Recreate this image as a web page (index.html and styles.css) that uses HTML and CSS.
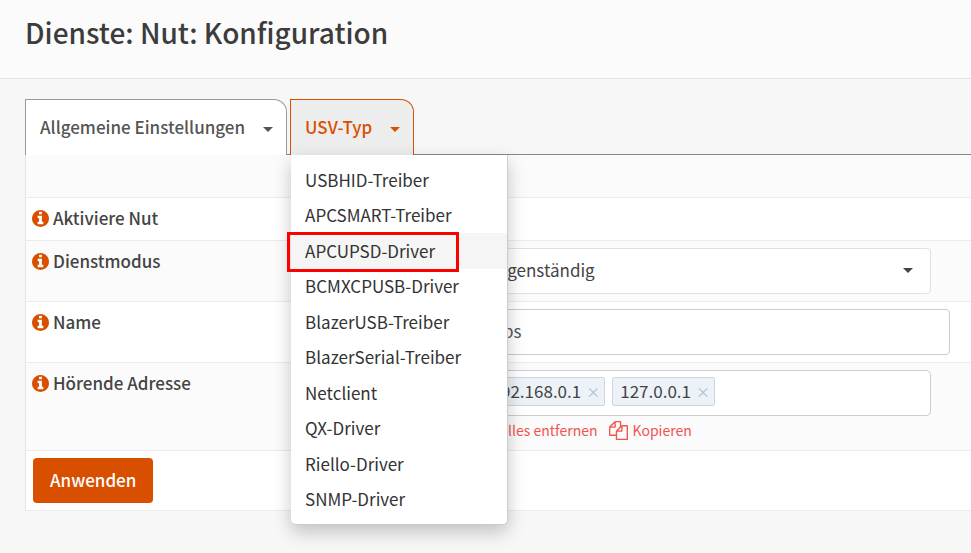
FILE: index.html
```
<!DOCTYPE html>
<html lang="de">
<head>
  <meta charset="UTF-8">
  <title>Dienste: Nut: Konfiguration</title>
  <link rel="stylesheet" href="styles.css">
</head>
<body>

  <!-- Shared icons -->
  <svg class="sprite" aria-hidden="true">
    <symbol id="icon-info" viewBox="128 128 1536 1536">
      <path d="M1152 1376v-160q0-14-9-23t-23-9h-96v-512q0-14-9-23t-23-9h-320q-14 0-23 9t-9 23v160q0 14 9 23t23 9h96v320h-96q-14 0-23 9t-9 23v160q0 14 9 23t23 9h448q14 0 23-9t9-23zm-128-896v-160q0-14-9-23t-23-9h-192q-14 0-23 9t-9 23v160q0 14 9 23t23 9h192q14 0 23-9t9-23zm640 416q0 209-103 385.5t-279.5 279.5-385.5 103-385.5-103-279.5-279.5-103-385.5 103-385.5 279.5-279.5 385.5-103 385.5 103 279.5 279.5 103 385.5z"/>
    </symbol>
    <symbol id="icon-copy" viewBox="0 0 1792 1792">
      <path d="M1696 384q40 0 68 28t28 68v1216q0 40-28 68t-68 28h-960q-40 0-68-28t-28-68v-288h-544q-40 0-68-28t-28-68v-672q0-40 20-88t48-76l408-408q28-28 76-48t88-20h416q40 0 68 28t28 68v328q68-40 128-40h416zm-544 213l-299 299h299v-299zm-640-384l-299 299h299v-299zm196 647l316-316v-416h-384v416q0 40-28 68t-68 28h-416v640h512v-256q0-40 20-88t48-76zm956 804v-1152h-384v416q0 40-28 68t-68 28h-416v640h896z"/>
    </symbol>
  </svg>

  <header class="page-head">
    <h1>Dienste: Nut: Konfiguration</h1>
  </header>

  <main class="content">
    <!-- Tabs -->
    <ul class="tabs">
      <li class="tab active">
        <a href="#general">Allgemeine Einstellungen</a>
        <button type="button" class="toggle" aria-label="Allgemeine Einstellungen öffnen"><span class="caret"></span></button>
      </li>
      <li class="tab open">
        <a href="#ups">USV-Typ</a>
        <button type="button" class="toggle" aria-label="USV-Typ öffnen"><span class="caret"></span></button>
        <ul class="menu">
          <li><a href="#usbhid">USBHID-Treiber</a></li>
          <li><a href="#apcsmart">APCSMART-Treiber</a></li>
          <li class="hover"><a href="#apcupsd">APCUPSD-Driver</a><span class="marker"></span></li>
          <li><a href="#bcmxcpusb">BCMXCPUSB-Driver</a></li>
          <li><a href="#blazerusb">BlazerUSB-Treiber</a></li>
          <li><a href="#blazerserial">BlazerSerial-Treiber</a></li>
          <li><a href="#netclient">Netclient</a></li>
          <li><a href="#qx">QX-Driver</a></li>
          <li><a href="#riello">Riello-Driver</a></li>
          <li><a href="#snmp">SNMP-Driver</a></li>
        </ul>
      </li>
    </ul>

    <!-- Settings form -->
    <form class="settings">
      <div class="row"></div>
      <div class="row">
        <label for="enable"><svg class="info"><use href="#icon-info"/></svg>Aktiviere Nut</label>
        <div class="field"><input type="checkbox" id="enable" checked></div>
      </div>
      <div class="row">
        <label for="mode"><svg class="info"><use href="#icon-info"/></svg>Dienstmodus</label>
        <div class="field">
          <div class="select-box">
            <select id="mode">
              <option>Eigenständig</option>
            </select>
            <span class="caret"></span>
          </div>
        </div>
      </div>
      <div class="row">
        <label for="name"><svg class="info"><use href="#icon-info"/></svg>Name</label>
        <div class="field wide"><input type="text" id="name" class="text" value="ups"></div>
      </div>
      <div class="row">
        <label for="listen"><svg class="info"><use href="#icon-info"/></svg>Hörende Adresse</label>
        <div class="field">
          <div class="tokens">
            <span class="token">192.168.0.1<button type="button" aria-label="192.168.0.1 entfernen">×</button></span>
            <span class="token">127.0.0.1<button type="button" aria-label="127.0.0.1 entfernen">×</button></span>
            <input type="text" id="listen">
          </div>
          <div class="links">
            <a href="#clear">Alles entfernen</a>
            <a href="#copy"><svg class="copy"><use href="#icon-copy"/></svg>Kopieren</a>
          </div>
        </div>
      </div>
      <div class="row">
        <div class="actions"><button type="submit" class="apply">Anwenden</button></div>
      </div>
    </form>
  </main>

</body>
</html>
```

FILE: styles.css
```
* {
  box-sizing: border-box;
}

body {
  margin: 0;
  background: #f7f7f7;
  color: #444;
  font-family: "Noto Sans CJK SC", "Open Sans", sans-serif;
  font-size: 17px;
  line-height: 26px;
  overflow-x: hidden;
}

input, select, button {
  font: inherit;
  color: inherit;
}

ul {
  list-style: none;
  margin: 0;
  padding: 0;
}

a {
  color: inherit;
  text-decoration: none;
}

.sprite {
  display: none;
}

.page-head {
  background: #fbfbfb;
  border-bottom: 1px solid #e5e5e5;
  padding: 12px 25px 26px;
}

.page-head h1 {
  margin: 0;
  font-size: 28px;
  font-weight: 500;
  line-height: 40px;
  color: #3c3c3c;
}

.content {
  padding: 20px 0 40px 25px;
}

.caret {
  display: block;
  border: 5px solid transparent;
  border-top-color: currentColor;
  border-bottom: 0;
}

/* Tabs */
.tabs {
  display: flex;
  gap: 3px;
  border-bottom: 1px solid #888;
}

.tab {
  position: relative;
  display: flex;
  align-items: center;
  height: 56px;
  margin-bottom: -1px;
  padding: 0 13px 2px 14px;
  border: 1px solid #999;
  border-bottom: 0;
  border-radius: 0 13px 0 0;
  background: #fff;
  color: #555;
  font-weight: 500;
}

.tab.open {
  background: #ededed;
  border-color: #d94f00;
  color: #d94f00;
}

.toggle {
  padding: 5px 0 0 18px;
  border: 0;
  background: none;
  cursor: pointer;
}

.menu {
  position: absolute;
  top: 55px;
  left: 0;
  z-index: 10;
  display: flex;
  flex-direction: column;
  width: 217px;
  min-height: 370px;
  padding: 7px 0;
  border: 1px solid #ccc;
  border-width: 0 1px 1px 0;
  border-radius: 0 0 5px 5px;
  background: #fff;
  box-shadow: 0 7px 18px rgba(0, 0, 0, 0.22);
  color: #333;
  font-weight: 400;
}

.menu li {
  position: relative;
  display: flex;
  align-items: center;
  flex: 1;
  padding: 0 14px;
}

.menu .hover {
  background: #f5f5f5;
}

.marker {
  position: absolute;
  top: -1px;
  left: -4px;
  width: 172px;
  height: 40px;
  border: 3px solid #f00;
}

/* Form */
.settings {
  border: 1px solid #e5e5e5;
  border-width: 0 0 0 1px;
  background: #fff;
}

.row {
  display: flex;
  min-height: 43px;
  padding: 7px;
  border-bottom: 1px solid #ebebeb;
}

.row:nth-child(odd) {
  background: #fbfbfb;
}

.row label {
  display: flex;
  align-items: center;
  gap: 4px;
  width: 47%;
  height: 26px;
  margin-left: -1px;
  font-weight: 500;
}

.info {
  width: 17px;
  height: 17px;
  fill: #d94f00;
}

.field {
  flex: 1;
  padding-right: 33px;
}

.field.wide {
  padding-right: 14px;
}

.select-box {
  position: relative;
}

.select-box select {
  display: block;
  width: 100%;
  height: 46px;
  padding: 0 22px 2px;
  border: 1px solid #e0e0e0;
  border-radius: 4px;
  background: #fff;
  appearance: none;
}

.select-box .caret {
  position: absolute;
  top: 20px;
  right: 18px;
}

.text {
  display: block;
  width: 100%;
  height: 46px;
  padding: 0 22px 3px;
  border: 1px solid #ccc;
  border-radius: 4px;
  background: #fff;
  color: #555;
}

.tokens {
  display: flex;
  align-items: center;
  gap: 7px;
  height: 46px;
  padding: 0 13px 4px;
  border: 1px solid #ccc;
  border-radius: 5px;
  background: #fff;
}

.token {
  display: flex;
  align-items: center;
  gap: 8px;
  height: 29px;
  padding: 0 7px 1px;
  border: 1px solid #ccd5e4;
  border-radius: 2px;
  background: #edf2f8;
}

.token button {
  display: flex;
  justify-content: center;
  width: 8px;
  padding: 0;
  border: 0;
  background: none;
  color: #a9c1da;
  font-size: 14px;
  cursor: pointer;
}

.tokens input {
  flex: 1;
  min-width: 0;
  border: 0;
  outline: 0;
}

.links {
  display: flex;
  gap: 12px;
  padding: 1px 0 0 30px;
  color: #f0544f;
  font-size: 14px;
}

.links a {
  display: flex;
  align-items: center;
  gap: 4px;
}

.copy {
  width: 19px;
  height: 19px;
  fill: currentColor;
}

.apply {
  height: 45px;
  padding: 0 17px 2px;
  border: 0;
  border-radius: 4px;
  background: #d94f00;
  color: #fff;
  font-weight: 500;
  cursor: pointer;
}
```
